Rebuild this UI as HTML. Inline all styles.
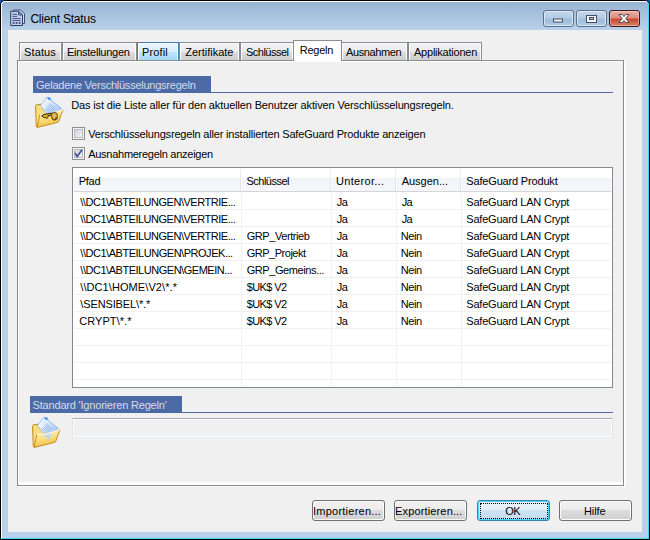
<!DOCTYPE html>
<html lang="de">
<head>
<meta charset="utf-8">
<title>Client Status</title>
<style>
html,body{margin:0;padding:0;}
body{width:650px;height:540px;overflow:hidden;background:#1a4aa8;font-family:'Liberation Sans',sans-serif;font-size:11px;position:relative;}
.abs,.t{position:absolute;}
.t{white-space:pre;line-height:20px;height:20px;z-index:5;}
#win{position:absolute;left:0;top:0;width:648px;height:538px;border:1px solid #000;border-radius:5px 5px 0 0;background:#b9d1ea;overflow:hidden;}
#winhl{position:absolute;left:0;top:0;width:646px;height:536px;border-top:1px solid #fff;border-left:1px solid #fff;border-right:1px solid #3fd6f4;border-bottom:1px solid #3fd6f4;border-radius:4px 4px 0 0;}
#title{position:absolute;left:1px;top:1px;width:646px;height:28px;background:linear-gradient(#98b4d4,#b9d1ea);}
#client{position:absolute;left:8px;top:30px;width:634px;height:502px;background:#f0f0f0;}
/* caption buttons */
.cb{position:absolute;top:10px;height:15px;width:29px;border:1px solid #5d7089;border-radius:3px;box-shadow:inset 0 0 0 1px rgba(255,255,255,.55);background:linear-gradient(#c3d6ec 0%,#b4cbe6 48%,#9dbbdc 52%,#b2cae6 100%);}
#bclose{border-color:#431422;background:linear-gradient(#eab0a4 0%,#dc8b7a 48%,#c4452c 52%,#d98468 100%);box-shadow:inset 0 0 0 1px rgba(255,255,255,.35);}
/* tabs */
.tab{position:absolute;top:42px;height:17px;border:1px solid #898c95;border-bottom:none;background:linear-gradient(#f2f2f2 0%,#ebebeb 50%,#dddddd 50%,#cfcfcf 100%);box-shadow:inset 1px 1px 0 #fcfcfc,inset -1px 0 0 #fcfcfc;box-sizing:content-box;}
.tab.hot{border-color:#3c7fb1;background:linear-gradient(#eaf6fd 0%,#d9f0fc 50%,#bee6fd 50%,#a7d9f5 100%);}
.tab.sel{top:40px;height:20px;background:#fff;box-shadow:none;z-index:3;}
#pane{position:absolute;left:17px;top:60px;width:605px;height:424px;border:1px solid #898c95;background:#fff;box-shadow:2px 1px 0 #fcfcfc;}
#page{position:absolute;left:19px;top:62px;width:604px;height:420px;background:#f0f0f0;}
.hdr{position:absolute;height:17px;background:#4b6aa6;}
.hline{position:absolute;height:1px;background:#4b6aa6;}
.chk{position:absolute;width:11px;height:11px;border:1px solid #8e8f8f;background:#f4f4f4;box-shadow:inset 0 0 0 1px #f4f4f4, inset 0 0 0 2px #b5bbc2;}
.chk i{position:absolute;left:2px;top:2px;width:7px;height:7px;background:linear-gradient(135deg,#cfd3d8,#f3f3f3);}
#list{position:absolute;left:72px;top:167px;width:539px;height:219px;border:1px solid #828790;background:#fff;}
#lh{position:absolute;left:74px;top:168px;width:537px;height:23px;background:linear-gradient(#fff 0%,#fff 42%,#f3f4f7 42%,#f5f6f9 100%);border-bottom:1px solid #d5d5d5;}
.vsep{position:absolute;width:1px;}
.gl{position:absolute;left:74px;width:537px;height:1px;background:#f0f0f0;}
.btn{position:absolute;top:500px;width:71px;height:19px;border:1px solid #707070;border-radius:3px;background:linear-gradient(#f2f2f2 0%,#ebebeb 50%,#dddddd 50%,#cfcfcf 100%);box-shadow:inset 0 0 0 1px #fcfcfc;}
.btn.def{border-color:#3c7fb1;box-shadow:inset 0 0 0 1px #48d8fb;background:linear-gradient(#eaf3fa 0%,#e1eef8 50%,#cde4f4 50%,#c3dcef 100%);}
.focus{position:absolute;left:480px;top:503px;width:66px;height:14px;border:1px dotted #000;}
#edit{position:absolute;left:72px;top:418px;width:539px;height:18px;border:1px solid #e2e3ea;border-top-color:#abadb3;border-bottom-color:#e3e9ef;background:#f0f0f0;box-shadow:inset 0 0 0 1px #fff;border-radius:1px;}
</style>
</head>
<body>
<div id="win">
 <div id="title"></div>
 <div id="winhl"></div>
</div>
<div id="client"></div>

<!-- caption buttons -->
<div class="cb" style="left:543px"></div>
<div class="cb" style="left:576px"></div>
<div class="cb" id="bclose" style="left:609px"></div>
<svg class="abs" style="left:543px;top:10px" width="98" height="17" viewBox="0 0 98 17">
 <rect x="10.5" y="9" width="9" height="3" fill="#f4f6f9" stroke="#45505f" stroke-width="1"/>
 <rect x="43.5" y="5.500" width="10" height="7" fill="#f4f6f9" stroke="#45505f" stroke-width="1"/>
 <rect x="46.5" y="7.500" width="4" height="2" fill="#a9c0dc" stroke="#45505f" stroke-width="1"/>
 <path d="M76 4.500 L79.300 4.500 L81 6.600 L82.700 4.500 L86 4.500 L82.800 8.500 L86 12.500 L82.700 12.500 L81 10.400 L79.300 12.500 L76 12.500 L79.200 8.500 Z" fill="#fff" stroke="#4a4f5c" stroke-width="1" stroke-linejoin="round"/>
</svg>

<!-- app icon -->
<svg class="abs" style="left:10px;top:9px" width="16" height="18" viewBox="0 0 16 18">
 <path d="M3.500 2.500 V1 H10.500 L14.500 4.700 V14.500 H12.500" fill="#d5dcf2" stroke="#414b72" stroke-width="1"/>
 <path d="M0.700 2.300 H8.500 L12.500 6 V16.500 H0.700 Z" fill="#bfcdf0" stroke="#353f66" stroke-width="1"/>
 <path d="M8.500 2.300 V6 H12.500 Z" fill="#6f9cea" stroke="#353f66" stroke-width="0.800"/>
 <path d="M2.500 5.300 H7 M2.500 7.400 H7 M2.500 9.600 H10.700 M2.500 11.600 H10.700" stroke="#46557f" stroke-width="1"/>
 <path d="M2.800 14 H4.600 M5.800 14 H7.600 M8.800 14 H10.600" stroke="#28325a" stroke-width="1.700"/>
</svg>

<!-- tab pane -->
<div id="pane"></div>
<div id="page"></div>
<div class="tab" style="left:19px;width:41px"></div>
<div class="tab" style="left:62px;width:73px"></div>
<div class="tab hot" style="left:137px;width:40px"></div>
<div class="tab" style="left:179px;width:59px"></div>
<div class="tab" style="left:240px;width:52px"></div>
<div class="tab" style="left:341px;width:65px"></div>
<div class="tab" style="left:408px;width:72px"></div>
<div class="tab sel" style="left:293px;width:47px"></div>

<!-- section 1 -->
<div class="hdr" style="left:33px;top:76px;width:178px"></div>
<div class="hline" style="left:33px;top:92px;width:580px"></div>
<div class="hdr" style="left:30px;top:396px;width:152px"></div>
<div class="hline" style="left:30px;top:412px;width:583px"></div>

<svg width="0" height="0" style="position:absolute">
 <defs>
  <linearGradient id="fyb" x1="0" y1="0" x2="1" y2="1"><stop offset="0" stop-color="#f7d774"/><stop offset="1" stop-color="#fbe9a4"/></linearGradient>
  <linearGradient id="fyf" x1="0" y1="0" x2="0.300" y2="1"><stop offset="0" stop-color="#fff6c8"/><stop offset="0.500" stop-color="#fbe28a"/><stop offset="1" stop-color="#f2c040"/></linearGradient>
  <linearGradient id="fdoc" x1="0" y1="0" x2="1" y2="0.600"><stop offset="0" stop-color="#ffffff"/><stop offset="0.450" stop-color="#dce9fb"/><stop offset="1" stop-color="#a4c3f3"/></linearGradient>
  <pattern id="hatch" width="2" height="2" patternUnits="userSpaceOnUse"><rect width="1" height="1" fill="#8fb4ee"/><rect x="1" y="1" width="1" height="1" fill="#8fb4ee"/></pattern>
  
 </defs>
</svg>
<svg class="abs" style="left:33px;top:95px" width="34" height="35" viewBox="0 0 34 35">
 <g>
   <path d="M2.500 11.500 Q2.500 9.700 4.200 9.600 L8.500 9.300 L10.500 11 L20 11 L20 22 L5.500 32 L3.300 31.500 Z" fill="url(#fyb)" stroke="#c48e18" stroke-width="1"/>
   <path d="M14 2.200 L28.300 13.200 L19 25 L7.300 10.600 Z" fill="url(#fdoc)" stroke="#86a6e6" stroke-width="0.700"/>
   <path d="M14 2.200 L17 2.200 L18.500 4.500 L15.500 5 Z" fill="#4d97f5"/>
   <path d="M17 8 L23 13 L17.500 20 L11.500 14 Z" fill="url(#hatch)" opacity="0.800"/>
  </g>
 <path d="M6.800 19.600 Q16 20.500 30 14.600 L25.500 26.800 L21 28.300 L4 32.400 Z" fill="url(#fyf)" stroke="#c48e18" stroke-width="1" stroke-linejoin="round"/>
 <path d="M6.800 19.600 Q16 20.500 30 14.600" fill="none" stroke="#fffbe6" stroke-width="1.200"/>
 <!-- key -->
 <path d="M8.600 20.900 L10.200 19.700 L18.300 18.100 L18.600 20 L15.200 20.700 L15 22.300 L13.600 23.600 L12.600 22.400 L11.400 23 L10.200 21.800 Z" fill="#e2ac1a" stroke="#17120a" stroke-width="0.900" stroke-linejoin="round"/>
 <circle cx="21.300" cy="20.700" r="3.300" fill="#eaa61c" stroke="#3a2a08" stroke-width="0.800"/>
 <path d="M19.300 24.300 L21.500 25.200 L24.600 23.400" fill="none" stroke="#17120a" stroke-width="0.900"/>
 <circle cx="21.400" cy="20.600" r="1.400" fill="#b4e4f8" stroke="#c89018" stroke-width="0.500"/>
 <circle cx="21" cy="23.300" r="0.800" fill="#f4e23a"/>
</svg>
<svg class="abs" style="left:30px;top:415px" width="34" height="35" viewBox="0 0 34 35">
 <g>
   <path d="M2.500 11.500 Q2.500 9.700 4.200 9.600 L8.500 9.300 L10.500 11 L20 11 L20 22 L5.500 32 L3.300 31.500 Z" fill="url(#fyb)" stroke="#c48e18" stroke-width="1"/>
   <path d="M14 2.200 L28.300 13.200 L19 25 L7.300 10.600 Z" fill="url(#fdoc)" stroke="#86a6e6" stroke-width="0.700"/>
   <path d="M14 2.200 L17 2.200 L18.500 4.500 L15.500 5 Z" fill="#4d97f5"/>
   <path d="M17 8 L23 13 L17.500 20 L11.500 14 Z" fill="url(#hatch)" opacity="0.800"/>
  </g>
 <path d="M6.800 19.600 Q16 20.500 30 14.600 L25.500 26.800 L21 28.300 L4 32.400 Z" fill="url(#fyf)" stroke="#c48e18" stroke-width="1" stroke-linejoin="round"/>
 <path d="M13 19.800 L23 17.200 L18.500 25.500 Z" fill="#bcd4f6" opacity="0.850"/>
 <path d="M6.800 19.600 Q16 20.500 30 14.600" fill="none" stroke="#fffbe6" stroke-width="1.200"/>
</svg>


<div class="chk" style="left:72px;top:127px"><i></i></div>
<div class="chk" style="left:72px;top:147px"><i></i></div>
<svg class="abs" style="left:72px;top:147px" width="13" height="13" viewBox="0 0 13 13"><path d="M3 6 L5.200 9.500 L10 2.800" fill="none" stroke="#3b4f9a" stroke-width="1.600"/></svg>

<!-- list -->
<div id="list"></div>
<div id="lh"></div>
<div class="gl" style="top:209px"></div>
<div class="gl" style="top:226px"></div>
<div class="gl" style="top:243px"></div>
<div class="gl" style="top:260px"></div>
<div class="gl" style="top:277px"></div>
<div class="gl" style="top:294px"></div>
<div class="gl" style="top:311px"></div>
<div class="gl" style="top:328px"></div>
<div class="gl" style="top:345px"></div>
<div class="gl" style="top:362px"></div>
<div class="gl" style="top:379px"></div>
<div class="vsep" style="left:240px;top:169px;height:22px;background:linear-gradient(#eceef1,#dcdfe5);box-shadow:1px 0 0 #fff"></div>
<div class="vsep" style="left:241px;top:193px;height:193px;background:#f0f0f0"></div>
<div class="vsep" style="left:330px;top:169px;height:22px;background:linear-gradient(#eceef1,#dcdfe5);box-shadow:1px 0 0 #fff"></div>
<div class="vsep" style="left:331px;top:193px;height:193px;background:#f0f0f0"></div>
<div class="vsep" style="left:395px;top:169px;height:22px;background:linear-gradient(#eceef1,#dcdfe5);box-shadow:1px 0 0 #fff"></div>
<div class="vsep" style="left:396px;top:193px;height:193px;background:#f0f0f0"></div>
<div class="vsep" style="left:460px;top:169px;height:22px;background:linear-gradient(#eceef1,#dcdfe5);box-shadow:1px 0 0 #fff"></div>
<div class="vsep" style="left:461px;top:193px;height:193px;background:#f0f0f0"></div>
<div id="edit"></div>

<!-- buttons -->
<div class="btn" style="left:312px"></div>
<div class="btn" style="left:394px"></div>
<div class="btn def" style="left:477px"></div>
<div class="btn" style="left:559px"></div>
<div class="focus"></div>

<span class="t" style="left:30.4px;top:9px;font-size:12px;letter-spacing:-0.21px;color:#000;">Client Status</span>
<span class="t" style="left:24.1px;top:42px;font-size:11px;letter-spacing:0.1px;color:#000;">Status</span>
<span class="t" style="left:66.9px;top:42px;font-size:11px;letter-spacing:-0.25px;color:#000;">Einstellungen</span>
<span class="t" style="left:142.1px;top:42px;font-size:11px;letter-spacing:0.1px;color:#000;">Profil</span>
<span class="t" style="left:185.3px;top:42px;font-size:11px;letter-spacing:-0.01px;color:#000;">Zertifikate</span>
<span class="t" style="left:245.9px;top:42px;font-size:11px;letter-spacing:-0.49px;color:#000;">Schlüssel</span>
<span class="t" style="left:299.8px;top:40px;font-size:11px;letter-spacing:-0.26px;color:#000;">Regeln</span>
<span class="t" style="left:346.0px;top:42px;font-size:11px;letter-spacing:-0.39px;color:#000;">Ausnahmen</span>
<span class="t" style="left:414.0px;top:42px;font-size:11px;letter-spacing:-0.23px;color:#000;">Applikationen</span>
<span class="t" style="left:36.0px;top:75px;font-size:11px;letter-spacing:-0.24px;color:#d6dceb;">Geladene Verschlüsselungsregeln</span>
<span class="t" style="left:32.6px;top:395px;font-size:11px;letter-spacing:-0.19px;color:#d6dceb;">Standard &#x27;Ignorieren Regeln&#x27;</span>
<span class="t" style="left:71.2px;top:95px;font-size:11px;letter-spacing:-0.13px;color:#000;">Das ist die Liste aller für den aktuellen Benutzer aktiven Verschlüsselungsregeln.</span>
<span class="t" style="left:88.2px;top:124px;font-size:11px;letter-spacing:-0.18px;color:#000;">Verschlüsselungsregeln aller installierten SafeGuard Produkte anzeigen</span>
<span class="t" style="left:88.2px;top:144px;font-size:11px;letter-spacing:-0.27px;color:#000;">Ausnahmeregeln anzeigen</span>
<span class="t" style="left:78.8px;top:171px;font-size:11px;letter-spacing:-0.3px;color:#000;">Pfad</span>
<span class="t" style="left:246.4px;top:171px;font-size:11px;letter-spacing:-0.49px;color:#000;">Schlüssel</span>
<span class="t" style="left:336.0px;top:171px;font-size:11px;letter-spacing:0.31px;color:#000;">Unteror...</span>
<span class="t" style="left:401.7px;top:171px;font-size:11px;letter-spacing:-0.01px;color:#000;">Ausgen...</span>
<span class="t" style="left:466.3px;top:171px;font-size:11px;letter-spacing:-0.17px;color:#000;">SafeGuard Produkt</span>
<span class="t" style="left:80.3px;top:192px;font-size:11px;letter-spacing:-0.48px;color:#000;">\\DC1\ABTEILUNGEN\VERTRIE...</span>
<span class="t" style="left:336.8px;top:192px;font-size:11px;letter-spacing:-0.6px;color:#000;">Ja</span>
<span class="t" style="left:401.7px;top:192px;font-size:11px;letter-spacing:-0.6px;color:#000;">Ja</span>
<span class="t" style="left:466.3px;top:192px;font-size:11px;letter-spacing:-0.22px;color:#000;">SafeGuard LAN Crypt</span>
<span class="t" style="left:80.3px;top:209px;font-size:11px;letter-spacing:-0.48px;color:#000;">\\DC1\ABTEILUNGEN\VERTRIE...</span>
<span class="t" style="left:336.8px;top:209px;font-size:11px;letter-spacing:-0.6px;color:#000;">Ja</span>
<span class="t" style="left:401.7px;top:209px;font-size:11px;letter-spacing:-0.6px;color:#000;">Ja</span>
<span class="t" style="left:466.3px;top:209px;font-size:11px;letter-spacing:-0.22px;color:#000;">SafeGuard LAN Crypt</span>
<span class="t" style="left:80.3px;top:226px;font-size:11px;letter-spacing:-0.48px;color:#000;">\\DC1\ABTEILUNGEN\VERTRIE...</span>
<span class="t" style="left:246.7px;top:226px;font-size:11px;letter-spacing:-0.42px;color:#000;">GRP_Vertrieb</span>
<span class="t" style="left:336.8px;top:226px;font-size:11px;letter-spacing:-0.6px;color:#000;">Ja</span>
<span class="t" style="left:400.7px;top:226px;font-size:11px;letter-spacing:-0.37px;color:#000;">Nein</span>
<span class="t" style="left:466.3px;top:226px;font-size:11px;letter-spacing:-0.22px;color:#000;">SafeGuard LAN Crypt</span>
<span class="t" style="left:80.3px;top:243px;font-size:11px;letter-spacing:-0.47px;color:#000;">\\DC1\ABTEILUNGEN\PROJEK...</span>
<span class="t" style="left:246.7px;top:243px;font-size:11px;letter-spacing:-0.48px;color:#000;">GRP_Projekt</span>
<span class="t" style="left:336.8px;top:243px;font-size:11px;letter-spacing:-0.6px;color:#000;">Ja</span>
<span class="t" style="left:400.7px;top:243px;font-size:11px;letter-spacing:-0.37px;color:#000;">Nein</span>
<span class="t" style="left:466.3px;top:243px;font-size:11px;letter-spacing:-0.22px;color:#000;">SafeGuard LAN Crypt</span>
<span class="t" style="left:80.3px;top:260px;font-size:11px;letter-spacing:-0.47px;color:#000;">\\DC1\ABTEILUNGEN\GEMEIN...</span>
<span class="t" style="left:246.7px;top:260px;font-size:11px;letter-spacing:-0.42px;color:#000;">GRP_Gemeins...</span>
<span class="t" style="left:336.8px;top:260px;font-size:11px;letter-spacing:-0.6px;color:#000;">Ja</span>
<span class="t" style="left:400.7px;top:260px;font-size:11px;letter-spacing:-0.37px;color:#000;">Nein</span>
<span class="t" style="left:466.3px;top:260px;font-size:11px;letter-spacing:-0.22px;color:#000;">SafeGuard LAN Crypt</span>
<span class="t" style="left:80.3px;top:277px;font-size:11px;letter-spacing:0.08px;color:#000;">\\DC1\HOME\V2\*.*</span>
<span class="t" style="left:246.7px;top:277px;font-size:11px;letter-spacing:-0.6px;color:#000;">$UK$ V2</span>
<span class="t" style="left:336.8px;top:277px;font-size:11px;letter-spacing:-0.6px;color:#000;">Ja</span>
<span class="t" style="left:400.7px;top:277px;font-size:11px;letter-spacing:-0.37px;color:#000;">Nein</span>
<span class="t" style="left:466.3px;top:277px;font-size:11px;letter-spacing:-0.22px;color:#000;">SafeGuard LAN Crypt</span>
<span class="t" style="left:80.3px;top:294px;font-size:11px;letter-spacing:-0.13px;color:#000;">\SENSIBEL\*.*</span>
<span class="t" style="left:246.7px;top:294px;font-size:11px;letter-spacing:-0.6px;color:#000;">$UK$ V2</span>
<span class="t" style="left:336.8px;top:294px;font-size:11px;letter-spacing:-0.6px;color:#000;">Ja</span>
<span class="t" style="left:400.7px;top:294px;font-size:11px;letter-spacing:-0.37px;color:#000;">Nein</span>
<span class="t" style="left:466.3px;top:294px;font-size:11px;letter-spacing:-0.22px;color:#000;">SafeGuard LAN Crypt</span>
<span class="t" style="left:79.3px;top:311px;font-size:11px;letter-spacing:0.05px;color:#000;">CRYPT\*.*</span>
<span class="t" style="left:246.7px;top:311px;font-size:11px;letter-spacing:-0.6px;color:#000;">$UK$ V2</span>
<span class="t" style="left:336.8px;top:311px;font-size:11px;letter-spacing:-0.6px;color:#000;">Ja</span>
<span class="t" style="left:400.7px;top:311px;font-size:11px;letter-spacing:-0.37px;color:#000;">Nein</span>
<span class="t" style="left:466.3px;top:311px;font-size:11px;letter-spacing:-0.22px;color:#000;">SafeGuard LAN Crypt</span>
<span class="t" style="left:313.0px;top:501px;font-size:11px;letter-spacing:0.24px;color:#000;">Importieren...</span>
<span class="t" style="left:395.1px;top:501px;font-size:11px;letter-spacing:0.14px;color:#000;">Exportieren...</span>
<span class="t" style="left:505.3px;top:501px;font-size:11px;letter-spacing:-0.6px;color:#000;">OK</span>
<span class="t" style="left:584.0px;top:501px;font-size:11px;letter-spacing:-0.1px;color:#000;">Hilfe</span>
</body>
</html>
